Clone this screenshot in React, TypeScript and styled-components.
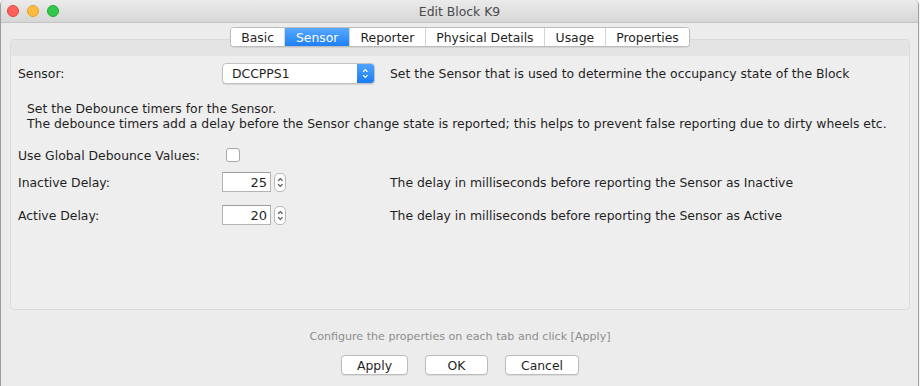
import * as React from 'react';
import styled, { createGlobalStyle } from 'styled-components';

const GlobalStyle = createGlobalStyle`
  html, body {
    margin: 0;
    padding: 0;
    background: #f6f6f6;
  }
  body {
    font-family: 'DejaVu Sans', 'Liberation Sans', sans-serif;
    font-size: 12.4px;
    color: #1f1f1f;
  }
`;

const Window = styled.div`
  width: 919px;
  height: 386px;
  box-sizing: border-box;
  display: flex;
  flex-direction: column;
  background: #ececec;
  border-left: 1px solid #9c9c9c;
  border-right: 1px solid #9c9c9c;
  border-radius: 5px 5px 0 0;
  overflow: hidden;
`;

const TitleBar = styled.div`
  height: 22px;
  flex: none;
  position: relative;
  display: flex;
  align-items: center;
  justify-content: center;
  background: linear-gradient(#ebebeb, #d6d6d6);
  border-bottom: 1px solid #c4c4c4;
  color: #4b4b4b;
`;

const Lights = styled.div`
  position: absolute;
  left: 6px;
  top: 5px;
  display: flex;
  gap: 8px;
`;

const Light = styled.span<{ $fill: string; $edge: string }>`
  width: 12px;
  height: 12px;
  border-radius: 50%;
  box-sizing: border-box;
  background: ${(p) => p.$fill};
  border: 1px solid ${(p) => p.$edge};
`;

const Body = styled.div`
  flex: 1;
  display: flex;
  flex-direction: column;
  padding: 4px 8px 0 9px;
`;

const TabStrip = styled.div`
  display: flex;
  justify-content: center;
  position: relative;
  z-index: 1;
  margin-bottom: -8px;
`;

const TabGroup = styled.div`
  display: flex;
  height: 20px;
  box-sizing: border-box;
  background: #fff;
  border: 1px solid #bdbdbd;
  border-radius: 4px;
  box-shadow: 0 1px 1px rgba(0, 0, 0, 0.08);
  overflow: hidden;
`;

const Tab = styled.div<{ $active?: boolean }>`
  display: flex;
  align-items: center;
  padding: 0 10.5px;
  border-left: 1px solid #d4d4d4;
  color: ${(p) => (p.$active ? '#fff' : '#1f1f1f')};
  background: ${(p) => (p.$active ? 'linear-gradient(#5aa9fd, #1d7ff6)' : '#fff')};
  &:first-child {
    border-left: none;
  }
`;

const Panel = styled.div`
  height: 271px;
  box-sizing: border-box;
  background: #eeeeee;
  border: 1px solid #dadada;
  border-radius: 4px;
  display: flex;
  flex-direction: column;
  overflow: hidden;
`;

const PanelBand = styled.div`
  height: 16px;
  flex: none;
  background: #e4e4e4;
`;

const Form = styled.div`
  padding: 7px 0 0 7px;
  display: flex;
  flex-direction: column;
`;

const Row = styled.div<{ $gap?: number }>`
  display: grid;
  grid-template-columns: 204px 168px 1fr;
  align-items: center;
  min-height: 20px;
  margin-top: ${(p) => p.$gap ?? 0}px;
`;

const Label = styled.span``;

const Note = styled.p`
  margin: 17px 0 0 9px;
  line-height: 15px;
`;

const Select = styled.div`
  width: 153px;
  height: 21px;
  box-sizing: border-box;
  display: flex;
  background: #fff;
  border: 1px solid #c2c2c2;
  border-radius: 4px;
  box-shadow: 0 1px 1px rgba(0, 0, 0, 0.1);
  overflow: hidden;
`;

const SelectValue = styled.span`
  flex: 1;
  display: flex;
  align-items: center;
  padding-left: 9px;
`;

const SelectArrow = styled.span`
  width: 17px;
  display: flex;
  align-items: center;
  justify-content: center;
  background: linear-gradient(#4fa3fd, #1a7cf5);
`;

const Checkbox = styled.span`
  width: 14px;
  height: 14px;
  margin-left: 4px;
  box-sizing: border-box;
  background: #fff;
  border: 1px solid #a9a9a9;
  border-radius: 3px;
`;

const Spin = styled.div`
  display: flex;
  align-items: center;
  gap: 3px;
`;

const NumField = styled.div`
  width: 49px;
  height: 20px;
  box-sizing: border-box;
  display: flex;
  align-items: center;
  justify-content: flex-end;
  padding-right: 3px;
  background: #fff;
  border: 1px solid #b4b4b4;
  border-top-color: #9e9e9e;
  font-size: 13px;
`;

const Stepper = styled.span`
  width: 12px;
  height: 19px;
  box-sizing: border-box;
  display: flex;
  align-items: center;
  justify-content: center;
  background: #fff;
  border: 1px solid #b9b9b9;
  border-radius: 5px;
`;

const Footer = styled.div`
  display: flex;
  flex-direction: column;
  align-items: center;
`;

const Hint = styled.div`
  margin-top: 19px;
  line-height: 15px;
  font-size: 11.1px;
  color: #8c8c8c;
`;

const Buttons = styled.div`
  display: flex;
  gap: 17px;
  margin-top: 11px;
`;

const Button = styled.button`
  height: 20px;
  min-width: 63px;
  padding: 0 15px;
  font: inherit;
  color: #1f1f1f;
  background: #fff;
  border: 1px solid #bcbcbc;
  border-radius: 4px;
  box-shadow: 0 1px 1px rgba(0, 0, 0, 0.08);
`;

const UpDown = ({ color, size }: { color: string; size: number }) => (
  <svg width={size * 0.6} height={size} viewBox="0 0 6 10" fill="none" stroke={color} strokeWidth="1.2">
    <path d="M1 3.5 L3 1.5 L5 3.5" />
    <path d="M1 6.5 L3 8.5 L5 6.5" />
  </svg>
);

const NumberSpinner = ({ value }: { value: number }) => (
  <Spin>
    <NumField>{value}</NumField>
    <Stepper>
      <UpDown color="#555" size={11} />
    </Stepper>
  </Spin>
);

const tabs = ['Basic', 'Sensor', 'Reporter', 'Physical Details', 'Usage', 'Properties'];

export default function App() {
  return (
    <>
      <GlobalStyle />
      <Window>
        <TitleBar>
          <Lights>
            <Light $fill="#fc605b" $edge="#de4a44" />
            <Light $fill="#fdbc40" $edge="#dea133" />
            <Light $fill="#34c84a" $edge="#26a934" />
          </Lights>
          Edit Block K9
        </TitleBar>
        <Body>
          <TabStrip>
            <TabGroup>
              {tabs.map((t) => (
                <Tab key={t} $active={t === 'Sensor'}>
                  {t}
                </Tab>
              ))}
            </TabGroup>
          </TabStrip>
          <Panel>
            <PanelBand />
            <Form>
              <Row>
                <Label>Sensor:</Label>
                <Select>
                  <SelectValue>DCCPPS1</SelectValue>
                  <SelectArrow>
                    <UpDown color="#fff" size={11} />
                  </SelectArrow>
                </Select>
                <Label>Set the Sensor that is used to determine the occupancy state of the Block</Label>
              </Row>
              <Note>
                Set the Debounce timers for the Sensor.
                <br />
                The debounce timers add a delay before the Sensor change state is reported; this helps to prevent
                false reporting due to dirty wheels etc.
              </Note>
              <Row $gap={14}>
                <Label>Use Global Debounce Values:</Label>
                <Checkbox />
              </Row>
              <Row $gap={7}>
                <Label>Inactive Delay:</Label>
                <NumberSpinner value={25} />
                <Label>The delay in milliseconds before reporting the Sensor as Inactive</Label>
              </Row>
              <Row $gap={13}>
                <Label>Active Delay:</Label>
                <NumberSpinner value={20} />
                <Label>The delay in milliseconds before reporting the Sensor as Active</Label>
              </Row>
            </Form>
          </Panel>
          <Footer>
            <Hint>Configure the properties on each tab and click [Apply]</Hint>
            <Buttons>
              <Button>Apply</Button>
              <Button>OK</Button>
              <Button>Cancel</Button>
            </Buttons>
          </Footer>
        </Body>
      </Window>
    </>
  );
}
